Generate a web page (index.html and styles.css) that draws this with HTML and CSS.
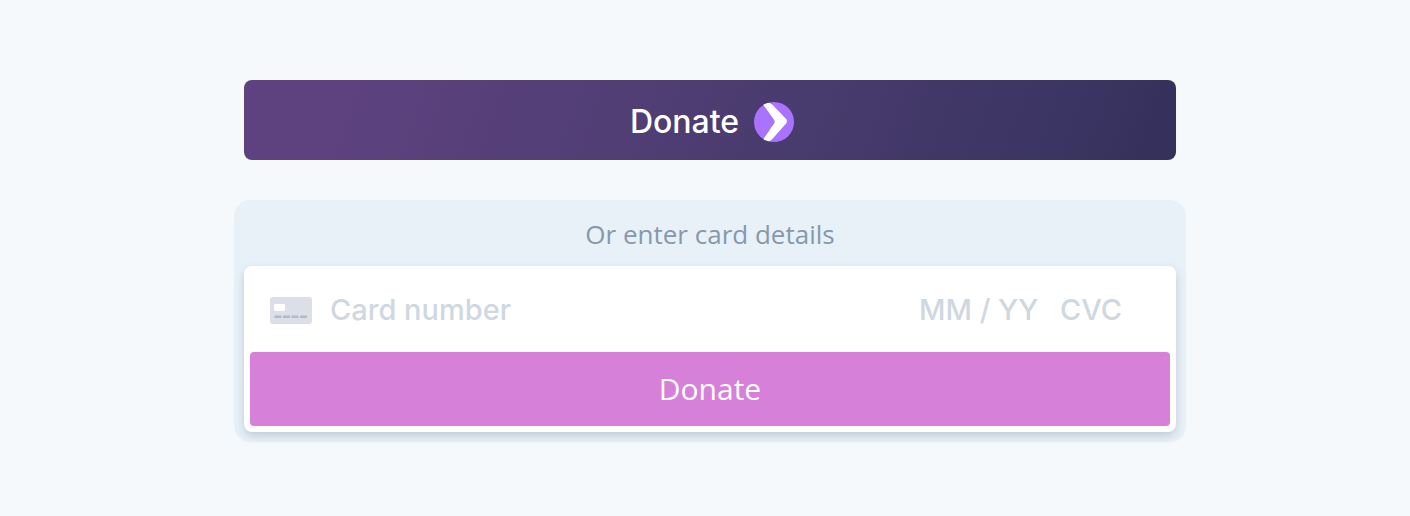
FILE: index.html
```html
<!DOCTYPE html>
<html lang="en">
<head>
<meta charset="utf-8">
<meta name="viewport" content="width=device-width, initial-scale=1">
<title>Donate</title>
<link rel="stylesheet" href="styles.css">
</head>
<body>
<main class="checkout">
  <button class="wallet-button" type="button">
    <span>Donate</span>
    <svg class="wallet-icon" viewBox="0 0 40 40" aria-hidden="true">
      <circle cx="20" cy="20" r="20" fill="#a973ff"/>
      <path d="M9.300 2.700Q12 1 15 .7Q17.300 1.200 19 3.200L32.300 17.300Q34 19.300 32.300 21.300L19 36.300Q17 38.700 15 39.300Q12 39 9.300 37.300L20.400 20.900Q21.200 19.500 20.400 18.300Z" fill="#fff"/>
    </svg>
  </button>
  <form class="card-panel">
    <p class="card-heading">Or enter card details</p>
    <div class="card-box">
      <div class="card-fields">
        <svg class="card-icon" viewBox="0 0 42 27" aria-hidden="true">
          <rect width="42" height="27" rx="3" fill="#dcdfe7"/>
          <rect x="4" y="7" width="11" height="7" rx="1" fill="#fff"/>
          <path d="M4.500 19.800h7M13 19.800h7M21.500 19.800h7M30 19.800h7" stroke="#b4b9cb" stroke-width="2.400"/>
        </svg>
        <input class="field field-number" type="text" placeholder="Card number" aria-label="Card number">
        <input class="field field-expiry" type="text" placeholder="MM / YY" aria-label="Expiry date">
        <input class="field field-cvc" type="text" placeholder="CVC" aria-label="CVC">
      </div>
      <button class="submit-button" type="submit">Donate</button>
    </div>
  </form>
</main>
</body>
</html>
```
FILE: styles.css
```css
* {
  box-sizing: border-box;
}

body {
  margin: 0;
  padding-left: 10px;
  background: #f5f9fc;
  font-family: "Open Sans", sans-serif;
}

.checkout {
  max-width: 952px;
  margin: 0 auto;
  padding: 80px 0;
  display: flex;
  flex-direction: column;
  gap: 40px;
}

.wallet-button {
  display: flex;
  align-items: center;
  justify-content: center;
  gap: 15px;
  margin: 0 10px;
  padding: 20px 0 16px 4px;
  border: 0;
  border-radius: 8px;
  background: linear-gradient(110deg, #5e4280 0%, #5b417d 18%, #483b6d 60%, #3b3563 86%, #34305a 100%);
  color: #fff;
  font: 500 32px/44px Inter, sans-serif;
}

.wallet-icon {
  width: 40px;
  height: 40px;
}

.card-panel {
  padding: 0 10px 10px;
  border-radius: 16px;
  background: #e9f1f8;
}

.card-heading {
  margin: 0;
  padding: 16px 0 14px;
  color: #8798ad;
  font-size: 26px;
  line-height: 36px;
  text-align: center;
}

.card-box {
  padding: 6px;
  border-radius: 8px;
  background: #fff;
  box-shadow: 0 4px 10px rgba(50, 70, 95, 0.22);
}

.card-fields {
  display: flex;
  align-items: center;
  height: 80px;
  padding: 0 20px 4px;
}

.card-icon {
  flex: none;
  width: 42px;
  height: 27px;
  margin-right: 18px;
}

.field {
  min-width: 0;
  height: 40px;
  padding: 0 0 2px;
  border: 0;
  outline: 0;
  background: transparent;
  color: #32325d;
  font: 500 29px/38px Inter, sans-serif;
}

.field::placeholder {
  color: #cfd7df;
  opacity: 1;
}

.field-number {
  flex: 1;
}

.field-expiry {
  width: 141px;
}

.field-cvc {
  width: 90px;
}

.submit-button {
  display: block;
  width: 100%;
  padding: 16px 0;
  border: 0;
  border-radius: 4px;
  background: #d780d9;
  color: #fff;
  font: 400 30px/42px "Open Sans", sans-serif;
}
```
